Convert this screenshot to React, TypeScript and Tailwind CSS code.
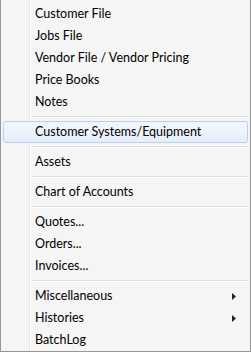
const groups: { label: string; sub?: boolean; hot?: boolean }[][] = [
  [
    { label: 'Customer File' },
    { label: 'Jobs File' },
    { label: 'Vendor File / Vendor Pricing' },
    { label: 'Price Books' },
    { label: 'Notes' },
  ],
  [{ label: 'Customer Systems/Equipment', hot: true }],
  [{ label: 'Assets' }],
  [{ label: 'Chart of Accounts' }],
  [{ label: 'Quotes...' }, { label: 'Orders...' }, { label: 'Invoices...' }],
  [{ label: 'Miscellaneous', sub: true }, { label: 'Histories', sub: true }, { label: 'BatchLog' }],
]

function Arrow() {
  return (
    <svg width="4" height="7" viewBox="0 0 4 7" className="mr-[11px]">
      <path d="M0 0 L4 3.5 L0 7 Z" fill="#222" />
    </svg>
  )
}

function MenuItem({ label, sub, hot }: { label: string; sub?: boolean; hot?: boolean }) {
  return (
    <div
      className={
        hot
          ? 'flex h-[22px] items-center justify-between rounded-[3px] border border-[#b6d1f2] bg-gradient-to-b from-[#f3f7fc] to-[#e7eefa] pl-[31px]'
          : 'flex h-[22px] items-center justify-between border border-transparent pl-[31px]'
      }
    >
      <span className="leading-none">{label}</span>
      {sub && <Arrow />}
    </div>
  )
}

export default function App() {
  return (
    <div className="h-[354px] w-[251px] bg-white font-['Lato','Liberation_Sans',sans-serif] text-[12.5px] text-black">
      <div className="relative h-[352px] w-[251px] border-x border-b border-[#979797] bg-[#f5f5f5] px-[2px] pt-[3px]">
        {/* gouttière */}
        <div className="absolute left-[28px] top-0 bottom-0 w-px bg-[#e2e3e3]" />
        <div className="absolute left-[29px] top-0 bottom-0 w-px bg-white" />
        <div className="relative">
          {groups.map((g, i) => (
            <div key={i}>
              {i > 0 && (
                <div className="flex h-[8px] items-center pl-[29px]">
                  <div className="w-full border-t border-b border-t-[#e0e0e0] border-b-white" />
                </div>
              )}
              {g.map((it) => (
                <MenuItem key={it.label} {...it} />
              ))}
            </div>
          ))}
        </div>
      </div>
    </div>
  )
}
